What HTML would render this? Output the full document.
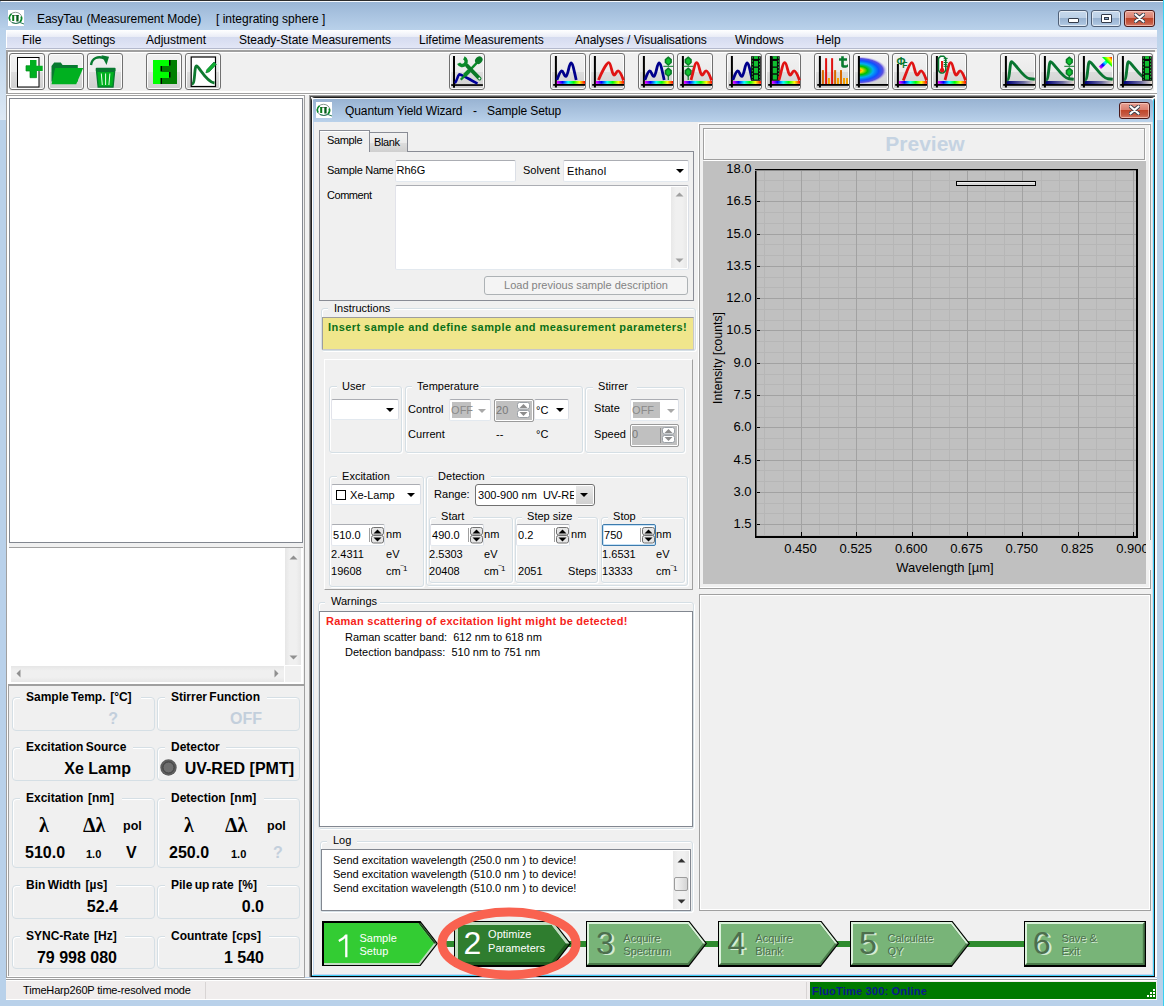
<!DOCTYPE html><html><head><meta charset="utf-8"><style>
html,body{margin:0;padding:0;}
body{width:1164px;height:1006px;position:relative;overflow:hidden;background:#b9d1ea;font-family:"Liberation Sans", sans-serif;}
body div, body svg{position:absolute;}
.t{white-space:nowrap;}
</style></head><body>
<div style="left:0px;top:0px;width:1164px;height:30px;background:linear-gradient(#98b4d4 0%, #a9c3e0 50%, #b9d1ea 100%)"></div>
<div style="left:0px;top:0px;width:1164px;height:1px;background:#2b2b2b"></div>
<div style="left:1px;top:1px;width:1162px;height:1px;background:#f6f9fd"></div>
<div style="left:0px;top:28px;width:6px;height:92px;background:linear-gradient(#b9d1ea,#d6e4f3 85%,#dde8f4)"></div>
<div style="left:1157px;top:28px;width:6px;height:92px;background:linear-gradient(#b9d1ea,#d6e4f3 85%,#dde8f4)"></div>
<div style="left:1163px;top:0px;width:1px;height:1006px;background:#38d0f0"></div>
<svg style="left:8px;top:10px" width="16" height="16" viewBox="0 0 16 16"><rect width="16" height="16" fill="#fff"/><ellipse cx="7.5" cy="7.9" rx="6.4" ry="5.6" fill="none" stroke="#8a9a92" stroke-width="1"/><path d="M2.2 10.5A6.4 5.6 0 0 1 3.5 3.8" fill="none" stroke="#0a8a2a" stroke-width="1.6"/><path d="M13.2 6.5A6.4 5.6 0 0 1 12 12" fill="none" stroke="#0a8a2a" stroke-width="1.6"/><rect x="4" y="5" width="7" height="1" fill="#8a8a8a"/><rect x="4.2" y="5" width="2" height="6" fill="#0a7a1a"/><rect x="8.3" y="5" width="2.3" height="6.5" fill="#055a1a"/><path d="M4 12.5Q8 14.5 12 12.5L16 14" fill="none" stroke="#2a7a5a" stroke-width="1"/></svg>
<div class="t" style="left:37px;top:12.84px;font-size:12px;line-height:12px;color:#000;letter-spacing:-0.1px;">EasyTau</div>
<div class="t" style="left:86.5px;top:12.84px;font-size:12px;line-height:12px;color:#000;">(Measurement Mode)</div>
<div class="t" style="left:216px;top:12.84px;font-size:12px;line-height:12px;color:#000;">[ integrating sphere ]</div>
<div style="left:1058px;top:10px;width:30px;height:17px;box-sizing:border-box;border:1px solid #4f5f76;border-radius:3px;background:linear-gradient(#c6d8ec 0%,#bcd0e6 45%,#98b2d0 50%,#a9c2de 85%,#c3d6ea 100%);box-shadow:inset 0 0 0 1px rgba(255,255,255,.55)"></div>
<div style="left:1068px;top:18px;width:11px;height:5px;background:#fff;border:1px solid #333b4a;border-radius:1px;box-sizing:border-box"></div>
<div style="left:1091px;top:10px;width:30px;height:17px;box-sizing:border-box;border:1px solid #4f5f76;border-radius:3px;background:linear-gradient(#c6d8ec 0%,#bcd0e6 45%,#98b2d0 50%,#a9c2de 85%,#c3d6ea 100%);box-shadow:inset 0 0 0 1px rgba(255,255,255,.55)"></div>
<div style="left:1101px;top:14px;width:11px;height:9px;background:#fff;border:1px solid #333b4a;border-radius:1px;box-sizing:border-box"></div>
<div style="left:1104px;top:17px;width:5px;height:3px;background:#8aa6c6;border:1px solid #333b4a;box-sizing:border-box"></div>
<div style="left:1124px;top:10px;width:31px;height:17px;box-sizing:border-box;border:1px solid #4a1a1a;border-radius:3px;background:linear-gradient(#e8a193 0%,#d98070 45%,#c0462a 50%,#c45b44 80%,#d9806c 100%);box-shadow:inset 0 0 0 1px rgba(255,220,210,.6)"></div>
<svg style="left:1134px;top:13px" width="11" height="10" viewBox="0 0 11 10"><path d="M1.5 1.5L9.5 8.5M9.5 1.5L1.5 8.5" stroke="#3a3f4a" stroke-width="4" stroke-linecap="round"/><path d="M1.5 1.5L9.5 8.5M9.5 1.5L1.5 8.5" stroke="#fff" stroke-width="2.2" stroke-linecap="round"/></svg>
<div style="left:6px;top:30px;width:1151px;height:18px;background:linear-gradient(#ffffff 0%,#e9ecf6 39%,#d5dbef 39%,#e2e6f6 100%)"></div>
<div class="t" style="left:22px;top:33.84px;font-size:12px;line-height:12px;color:#000;">File</div>
<div class="t" style="left:72px;top:33.84px;font-size:12px;line-height:12px;color:#000;">Settings</div>
<div class="t" style="left:146px;top:33.84px;font-size:12px;line-height:12px;color:#000;">Adjustment</div>
<div class="t" style="left:239px;top:33.84px;font-size:12px;line-height:12px;color:#000;">Steady-State Measurements</div>
<div class="t" style="left:419px;top:33.84px;font-size:12px;line-height:12px;color:#000;">Lifetime Measurements</div>
<div class="t" style="left:575px;top:33.84px;font-size:12px;line-height:12px;color:#000;">Analyses / Visualisations</div>
<div class="t" style="left:735px;top:33.84px;font-size:12px;line-height:12px;color:#000;">Windows</div>
<div class="t" style="left:816px;top:33.84px;font-size:12px;line-height:12px;color:#000;">Help</div>
<div style="left:6px;top:48px;width:1151px;height:1px;background:#b4b9cc"></div>
<div style="left:6px;top:49px;width:1151px;height:1px;background:#f6f6f6"></div>
<div style="left:6px;top:50px;width:1151px;height:43px;background:#f0f0f0"></div>
<div style="left:6px;top:50px;width:1149px;height:2px;background:#a0a0a0"></div>
<div style="left:6px;top:50px;width:2px;height:46px;background:#a0a0a0"></div>
<div style="left:8px;top:52px;width:1146px;height:1px;background:#fff"></div>
<div style="left:8px;top:52px;width:1px;height:40px;background:#fff"></div>
<div style="left:1154px;top:52px;width:3px;height:40px;background:#fff"></div>
<div style="left:8px;top:91px;width:1149px;height:2px;background:#ffffff"></div>
<div style="left:6px;top:93px;width:1151px;height:1px;background:#a0a0a0"></div>
<div style="left:6px;top:94px;width:1151px;height:1px;background:#ffffff"></div>
<div style="left:6px;top:95px;width:299px;height:1px;background:#a0a0a0"></div>
<div style="left:6px;top:30px;width:1px;height:18px;background:#fff"></div>
<div style="left:9px;top:53px;width:36px;height:37px;box-sizing:border-box;border:1px solid #707070;border-radius:3px;background:linear-gradient(#f2f2f2 0%,#ebebeb 50%,#dddddd 51%,#cfcfcf 100%);box-shadow:inset 0 0 0 1px #fcfcfc"></div>
<div style="left:48px;top:53px;width:36px;height:37px;box-sizing:border-box;border:1px solid #707070;border-radius:3px;background:linear-gradient(#f2f2f2 0%,#ebebeb 50%,#dddddd 51%,#cfcfcf 100%);box-shadow:inset 0 0 0 1px #fcfcfc"></div>
<div style="left:87px;top:53px;width:36px;height:37px;box-sizing:border-box;border:1px solid #707070;border-radius:3px;background:linear-gradient(#f2f2f2 0%,#ebebeb 50%,#dddddd 51%,#cfcfcf 100%);box-shadow:inset 0 0 0 1px #fcfcfc"></div>
<div style="left:146px;top:53px;width:36px;height:37px;box-sizing:border-box;border:1px solid #707070;border-radius:3px;background:linear-gradient(#f2f2f2 0%,#ebebeb 50%,#dddddd 51%,#cfcfcf 100%);box-shadow:inset 0 0 0 1px #fcfcfc"></div>
<div style="left:185px;top:53px;width:36px;height:37px;box-sizing:border-box;border:1px solid #707070;border-radius:3px;background:linear-gradient(#f2f2f2 0%,#ebebeb 50%,#dddddd 51%,#cfcfcf 100%);box-shadow:inset 0 0 0 1px #fcfcfc"></div>
<div style="left:449px;top:53px;width:36px;height:37px;box-sizing:border-box;border:1px solid #707070;border-radius:3px;background:linear-gradient(#f2f2f2 0%,#ebebeb 50%,#dddddd 51%,#cfcfcf 100%);box-shadow:inset 0 0 0 1px #fcfcfc"></div>
<div style="left:550px;top:53px;width:36px;height:37px;box-sizing:border-box;border:1px solid #707070;border-radius:3px;background:linear-gradient(#f2f2f2 0%,#ebebeb 50%,#dddddd 51%,#cfcfcf 100%);box-shadow:inset 0 0 0 1px #fcfcfc"></div>
<div style="left:589px;top:53px;width:36px;height:37px;box-sizing:border-box;border:1px solid #707070;border-radius:3px;background:linear-gradient(#f2f2f2 0%,#ebebeb 50%,#dddddd 51%,#cfcfcf 100%);box-shadow:inset 0 0 0 1px #fcfcfc"></div>
<div style="left:638px;top:53px;width:36px;height:37px;box-sizing:border-box;border:1px solid #707070;border-radius:3px;background:linear-gradient(#f2f2f2 0%,#ebebeb 50%,#dddddd 51%,#cfcfcf 100%);box-shadow:inset 0 0 0 1px #fcfcfc"></div>
<div style="left:677px;top:53px;width:36px;height:37px;box-sizing:border-box;border:1px solid #707070;border-radius:3px;background:linear-gradient(#f2f2f2 0%,#ebebeb 50%,#dddddd 51%,#cfcfcf 100%);box-shadow:inset 0 0 0 1px #fcfcfc"></div>
<div style="left:726px;top:53px;width:36px;height:37px;box-sizing:border-box;border:1px solid #707070;border-radius:3px;background:linear-gradient(#f2f2f2 0%,#ebebeb 50%,#dddddd 51%,#cfcfcf 100%);box-shadow:inset 0 0 0 1px #fcfcfc"></div>
<div style="left:765px;top:53px;width:36px;height:37px;box-sizing:border-box;border:1px solid #707070;border-radius:3px;background:linear-gradient(#f2f2f2 0%,#ebebeb 50%,#dddddd 51%,#cfcfcf 100%);box-shadow:inset 0 0 0 1px #fcfcfc"></div>
<div style="left:814px;top:53px;width:36px;height:37px;box-sizing:border-box;border:1px solid #707070;border-radius:3px;background:linear-gradient(#f2f2f2 0%,#ebebeb 50%,#dddddd 51%,#cfcfcf 100%);box-shadow:inset 0 0 0 1px #fcfcfc"></div>
<div style="left:853px;top:53px;width:36px;height:37px;box-sizing:border-box;border:1px solid #707070;border-radius:3px;background:linear-gradient(#f2f2f2 0%,#ebebeb 50%,#dddddd 51%,#cfcfcf 100%);box-shadow:inset 0 0 0 1px #fcfcfc"></div>
<div style="left:892px;top:53px;width:36px;height:37px;box-sizing:border-box;border:1px solid #707070;border-radius:3px;background:linear-gradient(#f2f2f2 0%,#ebebeb 50%,#dddddd 51%,#cfcfcf 100%);box-shadow:inset 0 0 0 1px #fcfcfc"></div>
<div style="left:931px;top:53px;width:36px;height:37px;box-sizing:border-box;border:1px solid #707070;border-radius:3px;background:linear-gradient(#f2f2f2 0%,#ebebeb 50%,#dddddd 51%,#cfcfcf 100%);box-shadow:inset 0 0 0 1px #fcfcfc"></div>
<div style="left:1000px;top:53px;width:36px;height:37px;box-sizing:border-box;border:1px solid #707070;border-radius:3px;background:linear-gradient(#f2f2f2 0%,#ebebeb 50%,#dddddd 51%,#cfcfcf 100%);box-shadow:inset 0 0 0 1px #fcfcfc"></div>
<div style="left:1039px;top:53px;width:36px;height:37px;box-sizing:border-box;border:1px solid #707070;border-radius:3px;background:linear-gradient(#f2f2f2 0%,#ebebeb 50%,#dddddd 51%,#cfcfcf 100%);box-shadow:inset 0 0 0 1px #fcfcfc"></div>
<div style="left:1078px;top:53px;width:36px;height:37px;box-sizing:border-box;border:1px solid #707070;border-radius:3px;background:linear-gradient(#f2f2f2 0%,#ebebeb 50%,#dddddd 51%,#cfcfcf 100%);box-shadow:inset 0 0 0 1px #fcfcfc"></div>
<div style="left:1117px;top:53px;width:36px;height:37px;box-sizing:border-box;border:1px solid #707070;border-radius:3px;background:linear-gradient(#f2f2f2 0%,#ebebeb 50%,#dddddd 51%,#cfcfcf 100%);box-shadow:inset 0 0 0 1px #fcfcfc"></div>
<div style="left:6px;top:96px;width:299px;height:881px;background:#f0f0f0"></div>
<div style="left:6px;top:96px;width:1px;height:881px;background:#a0a0a0"></div>
<div style="left:7px;top:96px;width:297px;height:2px;background:#fff"></div>
<div style="left:7px;top:96px;width:2px;height:881px;background:#fff"></div>
<div style="left:304px;top:96px;width:1px;height:881px;background:#a0a0a0"></div>
<div style="left:9px;top:98px;width:294px;height:445px;background:#fff;border:1px solid #828790;box-sizing:border-box"></div>
<div style="left:9px;top:547px;width:294px;height:138px;background:#fff;border-top:1px solid #a0a0a0;box-sizing:border-box"></div>
<div style="left:285px;top:548px;width:16px;height:117px;background:linear-gradient(90deg,#e6e6e6,#f0f0f0 30%,#f0f0f0 70%,#e6e6e6)"></div>
<svg style="left:289px;top:555px" width="9" height="5"><path d="M0.5 4.5L4.5 0.5L8.5 4.5Z" fill="#909090"/></svg>
<svg style="left:289px;top:655px" width="9" height="5"><path d="M0.5 0.5L4.5 4.5L8.5 0.5Z" fill="#909090"/></svg>
<div style="left:11px;top:666px;width:273px;height:16px;background:linear-gradient(#e6e6e6,#f0f0f0 30%,#f0f0f0 70%,#e6e6e6)"></div>
<div style="left:285px;top:666px;width:16px;height:16px;background:#f0f0f0"></div>
<svg style="left:16px;top:669px" width="5" height="9"><path d="M4.5 0.5L0.5 4.5L4.5 8.5Z" fill="#909090"/></svg>
<svg style="left:274px;top:669px" width="5" height="9"><path d="M0.5 0.5L4.5 4.5L0.5 8.5Z" fill="#909090"/></svg>
<div style="left:8px;top:684px;width:296px;height:2px;background:#a0a0a0"></div>
<div style="left:8px;top:686px;width:296px;height:291px;background:#f0f0f0"></div>
<div style="left:8px;top:686px;width:1px;height:291px;background:#a0a0a0"></div>
<div style="left:8px;top:976px;width:296px;height:1px;background:#fff"></div>
<div style="left:12px;top:697px;width:143px;height:34px;border:1px solid #d5dfe5;border-radius:4px;box-shadow:inset 1px 1px 0 #fff;box-sizing:border-box"></div>
<div class="t" style="left:20px;top:695px;height:4px;background:#f0f0f0;padding:0 6px;font-size:12px;line-height:0;color:transparent;font-weight:bold">Sample Temp.&nbsp; [°C]</div>
<div class="t" style="left:26px;top:691.34px;font-size:12px;line-height:12px;color:#000;font-weight:bold;word-spacing:-1px">Sample Temp.&nbsp; [°C]</div>
<div style="left:157px;top:697px;width:143px;height:34px;border:1px solid #d5dfe5;border-radius:4px;box-shadow:inset 1px 1px 0 #fff;box-sizing:border-box"></div>
<div class="t" style="left:165px;top:695px;height:4px;background:#f0f0f0;padding:0 6px;font-size:12px;line-height:0;color:transparent;font-weight:bold">Stirrer Function</div>
<div class="t" style="left:171px;top:691.34px;font-size:12px;line-height:12px;color:#000;font-weight:bold;word-spacing:-1px">Stirrer Function</div>
<div style="left:12px;top:747px;width:143px;height:34px;border:1px solid #d5dfe5;border-radius:4px;box-shadow:inset 1px 1px 0 #fff;box-sizing:border-box"></div>
<div class="t" style="left:20px;top:745px;height:4px;background:#f0f0f0;padding:0 6px;font-size:12px;line-height:0;color:transparent;font-weight:bold">Excitation Source</div>
<div class="t" style="left:26px;top:741.34px;font-size:12px;line-height:12px;color:#000;font-weight:bold;word-spacing:-1px">Excitation Source</div>
<div style="left:157px;top:747px;width:143px;height:34px;border:1px solid #d5dfe5;border-radius:4px;box-shadow:inset 1px 1px 0 #fff;box-sizing:border-box"></div>
<div class="t" style="left:165px;top:745px;height:4px;background:#f0f0f0;padding:0 6px;font-size:12px;line-height:0;color:transparent;font-weight:bold">Detector</div>
<div class="t" style="left:171px;top:741.34px;font-size:12px;line-height:12px;color:#000;font-weight:bold;word-spacing:-1px">Detector</div>
<div style="left:12px;top:798px;width:143px;height:70px;border:1px solid #d5dfe5;border-radius:4px;box-shadow:inset 1px 1px 0 #fff;box-sizing:border-box"></div>
<div class="t" style="left:20px;top:796px;height:4px;background:#f0f0f0;padding:0 6px;font-size:12px;line-height:0;color:transparent;font-weight:bold">Excitation&nbsp; [nm]</div>
<div class="t" style="left:26px;top:792.34px;font-size:12px;line-height:12px;color:#000;font-weight:bold;word-spacing:-1px">Excitation&nbsp; [nm]</div>
<div style="left:157px;top:798px;width:143px;height:70px;border:1px solid #d5dfe5;border-radius:4px;box-shadow:inset 1px 1px 0 #fff;box-sizing:border-box"></div>
<div class="t" style="left:165px;top:796px;height:4px;background:#f0f0f0;padding:0 6px;font-size:12px;line-height:0;color:transparent;font-weight:bold">Detection&nbsp; [nm]</div>
<div class="t" style="left:171px;top:792.34px;font-size:12px;line-height:12px;color:#000;font-weight:bold;word-spacing:-1px">Detection&nbsp; [nm]</div>
<div style="left:12px;top:885px;width:143px;height:34px;border:1px solid #d5dfe5;border-radius:4px;box-shadow:inset 1px 1px 0 #fff;box-sizing:border-box"></div>
<div class="t" style="left:20px;top:883px;height:4px;background:#f0f0f0;padding:0 6px;font-size:12px;line-height:0;color:transparent;font-weight:bold">Bin Width&nbsp; [µs]</div>
<div class="t" style="left:26px;top:879.34px;font-size:12px;line-height:12px;color:#000;font-weight:bold;word-spacing:-1px">Bin Width&nbsp; [µs]</div>
<div style="left:157px;top:885px;width:143px;height:34px;border:1px solid #d5dfe5;border-radius:4px;box-shadow:inset 1px 1px 0 #fff;box-sizing:border-box"></div>
<div class="t" style="left:165px;top:883px;height:4px;background:#f0f0f0;padding:0 6px;font-size:12px;line-height:0;color:transparent;font-weight:bold">Pile up rate&nbsp; [%]</div>
<div class="t" style="left:171px;top:879.34px;font-size:12px;line-height:12px;color:#000;font-weight:bold;word-spacing:-1px">Pile up rate&nbsp; [%]</div>
<div style="left:12px;top:936px;width:143px;height:33px;border:1px solid #d5dfe5;border-radius:4px;box-shadow:inset 1px 1px 0 #fff;box-sizing:border-box"></div>
<div class="t" style="left:20px;top:934px;height:4px;background:#f0f0f0;padding:0 6px;font-size:12px;line-height:0;color:transparent;font-weight:bold">SYNC-Rate&nbsp; [Hz]</div>
<div class="t" style="left:26px;top:930.34px;font-size:12px;line-height:12px;color:#000;font-weight:bold;word-spacing:-1px">SYNC-Rate&nbsp; [Hz]</div>
<div style="left:157px;top:936px;width:143px;height:33px;border:1px solid #d5dfe5;border-radius:4px;box-shadow:inset 1px 1px 0 #fff;box-sizing:border-box"></div>
<div class="t" style="left:165px;top:934px;height:4px;background:#f0f0f0;padding:0 6px;font-size:12px;line-height:0;color:transparent;font-weight:bold">Countrate&nbsp; [cps]</div>
<div class="t" style="left:171px;top:930.34px;font-size:12px;line-height:12px;color:#000;font-weight:bold;word-spacing:-1px">Countrate&nbsp; [cps]</div>
<div class="t" style="right:1046px;top:711.06px;font-size:16px;line-height:16px;color:#c3cfdc;font-weight:bold;">?</div>
<div class="t" style="right:902px;top:711.06px;font-size:16px;line-height:16px;color:#c3cfdc;font-weight:bold;">OFF</div>
<div class="t" style="right:1033px;top:761.06px;font-size:16px;line-height:16px;color:#000;font-weight:bold;">Xe Lamp</div>
<svg style="left:159px;top:758px" width="19" height="19" viewBox="0 0 19 19"><circle cx="9.5" cy="9.5" r="8.8" fill="#f8f8f8"/><circle cx="9.5" cy="9.5" r="8.2" fill="#5e5e5e"/><circle cx="9.5" cy="9.5" r="5.6" fill="#6e6e6e" stroke="#3c3c3c" stroke-width="1"/></svg>
<div class="t" style="right:870px;top:761.06px;font-size:16px;line-height:16px;color:#000;font-weight:bold;">UV-RED [PMT]</div>
<div class="t" style="left:39px;top:815.07px;font-size:20px;line-height:20px;color:#000;font-weight:bold;font-family:Liberation Serif,serif">λ</div>
<div class="t" style="left:83px;top:815.07px;font-size:20px;line-height:20px;color:#000;font-weight:bold;font-family:Liberation Serif,serif">Δλ</div>
<div class="t" style="left:123px;top:820.42px;font-size:12.5px;line-height:12.5px;color:#000;font-weight:bold;">pol</div>
<div class="t" style="left:184px;top:815.07px;font-size:20px;line-height:20px;color:#000;font-weight:bold;font-family:Liberation Serif,serif">λ</div>
<div class="t" style="left:225px;top:815.07px;font-size:20px;line-height:20px;color:#000;font-weight:bold;font-family:Liberation Serif,serif">Δλ</div>
<div class="t" style="left:267px;top:820.42px;font-size:12.5px;line-height:12.5px;color:#000;font-weight:bold;">pol</div>
<div class="t" style="left:25px;top:845.06px;font-size:16px;line-height:16px;color:#000;font-weight:bold;">510.0</div>
<div class="t" style="left:86px;top:848.69px;font-size:11px;line-height:11px;color:#000;font-weight:bold;">1.0</div>
<div class="t" style="left:126px;top:845.06px;font-size:16px;line-height:16px;color:#000;font-weight:bold;">V</div>
<div class="t" style="left:169px;top:845.06px;font-size:16px;line-height:16px;color:#000;font-weight:bold;">250.0</div>
<div class="t" style="left:231px;top:848.69px;font-size:11px;line-height:11px;color:#000;font-weight:bold;">1.0</div>
<div class="t" style="left:273px;top:845.06px;font-size:16px;line-height:16px;color:#c3cfdc;font-weight:bold;">?</div>
<div class="t" style="right:1046px;top:899.06px;font-size:16px;line-height:16px;color:#000;font-weight:bold;">52.4</div>
<div class="t" style="right:900px;top:899.06px;font-size:16px;line-height:16px;color:#000;font-weight:bold;">0.0</div>
<div class="t" style="right:1047px;top:950.06px;font-size:16px;line-height:16px;color:#000;font-weight:bold;">79 998 080</div>
<div class="t" style="right:900px;top:950.06px;font-size:16px;line-height:16px;color:#000;font-weight:bold;">1 540</div>
<div style="left:6px;top:977px;width:299px;height:1px;background:#a0a0a0"></div>
<div style="left:6px;top:978px;width:1151px;height:1px;background:#fff"></div>
<div style="left:6px;top:979px;width:1151px;height:1px;background:#a0a0a0"></div>
<div style="left:6px;top:980px;width:1151px;height:20px;background:#f0eded"></div>
<div style="left:6px;top:980px;width:1151px;height:1px;background:#fff"></div>
<div style="left:6px;top:999px;width:1151px;height:1px;background:#fff"></div>
<div style="left:205px;top:982px;width:1px;height:17px;background:#d8d4d4"></div>
<div style="left:806px;top:982px;width:1px;height:17px;background:#d8d4d4"></div>
<div class="t" style="left:23px;top:984.69px;font-size:11px;line-height:11px;color:#000;letter-spacing:-0.17px;">TimeHarp260P time-resolved mode</div>
<div style="left:810px;top:982px;width:346px;height:17px;background:#007a00"></div>
<div style="left:1153px;top:989px;width:2px;height:2px;background:#fff"></div>
<div style="left:1150px;top:992px;width:2px;height:2px;background:#fff"></div>
<div style="left:1153px;top:992px;width:2px;height:2px;background:#fff"></div>
<div style="left:1147px;top:995px;width:2px;height:2px;background:#fff"></div>
<div style="left:1150px;top:995px;width:2px;height:2px;background:#fff"></div>
<div style="left:1153px;top:995px;width:2px;height:2px;background:#fff"></div>
<div class="t" style="left:812px;top:985.69px;font-size:11px;line-height:11px;color:#0a1a8a;font-weight:bold;letter-spacing:0.2px;">FluoTime 300: Online</div>
<div style="left:305px;top:95px;width:4px;height:882px;background:#f0f0f0"></div>
<div style="left:309px;top:95px;width:848px;height:882px;background:#fff"></div>
<div style="left:309px;top:95px;width:1px;height:882px;background:#a0a0a0"></div>
<div style="left:309px;top:95px;width:846px;height:1px;background:#a0a0a0"></div>
<div style="left:310px;top:96px;width:1px;height:881px;background:#555"></div>
<div style="left:310px;top:96px;width:845px;height:1px;background:#555"></div>
<div style="left:311px;top:97px;width:844px;height:880px;border:1px solid #1e1e1e;border-radius:4px 4px 0 0;box-sizing:border-box;border-bottom:none;height:880px"></div>
<div style="left:311px;top:976px;width:844px;height:1px;background:#000"></div>
<div style="left:312px;top:98px;width:842px;height:1px;background:#ffffff"></div>
<div style="left:312px;top:99px;width:841px;height:23px;background:linear-gradient(#98b3d2 0%,#a9c2de 50%,#b9d1ea 100%);border-radius:3px 3px 0 0"></div>
<div style="left:312px;top:99px;width:1px;height:877px;background:#fff"></div>
<div style="left:1153px;top:99px;width:1px;height:877px;background:#40d0f8"></div>
<div style="left:312px;top:975px;width:842px;height:1px;background:#40d0f8"></div>
<div style="left:313px;top:122px;width:840px;height:853px;background:#f0f0f0"></div>
<div style="left:313px;top:122px;width:1px;height:853px;background:#c4d8ee"></div>
<div style="left:1152px;top:122px;width:1px;height:853px;background:#d0e0f0"></div>
<div style="left:313px;top:974px;width:840px;height:1px;background:#c8d4ee"></div>
<svg style="left:316px;top:102px" width="16" height="16" viewBox="0 0 16 16"><rect width="16" height="16" fill="#fff"/><ellipse cx="7.5" cy="7.9" rx="6.4" ry="5.6" fill="none" stroke="#8a9a92" stroke-width="1"/><path d="M2.2 10.5A6.4 5.6 0 0 1 3.5 3.8" fill="none" stroke="#0a8a2a" stroke-width="1.6"/><path d="M13.2 6.5A6.4 5.6 0 0 1 12 12" fill="none" stroke="#0a8a2a" stroke-width="1.6"/><rect x="4" y="5" width="7" height="1" fill="#8a8a8a"/><rect x="4.2" y="5" width="2" height="6" fill="#0a7a1a"/><rect x="8.3" y="5" width="2.3" height="6.5" fill="#055a1a"/><path d="M4 12.5Q8 14.5 12 12.5L16 14" fill="none" stroke="#2a7a5a" stroke-width="1"/></svg>
<div class="t" style="left:345px;top:104.84px;font-size:12px;line-height:12px;color:#000;letter-spacing:-0.1px;">Quantum Yield Wizard</div>
<div class="t" style="left:473px;top:104.84px;font-size:12px;line-height:12px;color:#000;">-</div>
<div class="t" style="left:487px;top:104.84px;font-size:12px;line-height:12px;color:#000;letter-spacing:-0.1px;">Sample Setup</div>
<div style="left:1119px;top:102px;width:31px;height:17px;box-sizing:border-box;border:1px solid #4a1a1a;border-radius:3px;background:linear-gradient(#e8a193 0%,#d98070 45%,#c0462a 50%,#c45b44 80%,#d9806c 100%);box-shadow:inset 0 0 0 1px rgba(255,220,210,.6)"></div>
<svg style="left:1129px;top:105px" width="11" height="10" viewBox="0 0 11 10"><path d="M1.5 1.5L9.5 8.5M9.5 1.5L1.5 8.5" stroke="#3a3f4a" stroke-width="4" stroke-linecap="round"/><path d="M1.5 1.5L9.5 8.5M9.5 1.5L1.5 8.5" stroke="#fff" stroke-width="2.2" stroke-linecap="round"/></svg>
<div style="left:319px;top:151px;width:375px;height:150px;background:#fff;border:1px solid #898c95;box-sizing:border-box"></div>
<div style="left:320px;top:152px;width:373px;height:148px;background:#f0f0f0"></div>
<div style="left:369px;top:132px;width:39px;height:20px;background:linear-gradient(#f2f2f2,#ebebeb 50%,#dddddd 51%,#cfcfcf);border:1px solid #898c95;border-bottom:none;box-sizing:border-box"></div>
<div style="left:319px;top:130px;width:51px;height:22px;background:#f0f0f0;border:1px solid #898c95;border-bottom:none;box-sizing:border-box"></div>
<div style="left:320px;top:131px;width:49px;height:1px;background:#fff"></div>
<div class="t" style="left:327px;top:134.69px;font-size:11px;line-height:11px;color:#000;letter-spacing:-0.35px;">Sample</div>
<div class="t" style="left:374px;top:136.69px;font-size:11px;line-height:11px;color:#000;letter-spacing:-0.35px;">Blank</div>
<div class="t" style="left:327px;top:164.69px;font-size:11px;line-height:11px;color:#000;letter-spacing:-0.3px;">Sample Name</div>
<div style="left:395px;top:160px;width:121px;height:22px;background:#fff;border-top:1px solid #abadb3;border-left:1px solid #e2e3ea;border-right:1px solid #dbdfe6;border-bottom:1px solid #e3e9ef;box-sizing:border-box;border-radius:2px;"></div>
<div class="t" style="left:396.5px;top:164.69px;font-size:11px;line-height:11px;color:#000;">Rh6G</div>
<div class="t" style="left:523px;top:164.69px;font-size:11px;line-height:11px;color:#000;">Solvent</div>
<div style="left:563px;top:160px;width:126px;height:22px;background:#fff;border-top:1px solid #abadb3;border-left:1px solid #e2e3ea;border-right:1px solid #dbdfe6;border-bottom:1px solid #e3e9ef;box-sizing:border-box;border-radius:2px;"></div>
<div class="t" style="left:567px;top:165.69px;font-size:11px;line-height:11px;color:#000;letter-spacing:0.3px;">Ethanol</div>
<div style="left:676px;top:169px;width:0;height:0;border-left:4px solid transparent;border-right:4px solid transparent;border-top:4px solid #000"></div>
<div class="t" style="left:327px;top:189.69px;font-size:11px;line-height:11px;color:#000;letter-spacing:-0.45px;">Comment</div>
<div style="left:395px;top:185px;width:294px;height:85px;background:#fff;border-top:1px solid #abadb3;border-left:1px solid #e2e3ea;border-right:1px solid #dbdfe6;border-bottom:1px solid #e3e9ef;box-sizing:border-box;border-radius:2px;"></div>
<div style="left:671px;top:187px;width:16px;height:81px;background:linear-gradient(90deg,#e8e8e8,#f0f0f0 30%,#f0f0f0 70%,#e8e8e8)"></div>
<svg style="left:675px;top:192px" width="9" height="5"><path d="M0.5 4.5L4.5 0.5L8.5 4.5Z" fill="#a0a0a0"/></svg>
<svg style="left:675px;top:258px" width="9" height="5"><path d="M0.5 0.5L4.5 4.5L8.5 0.5Z" fill="#a0a0a0"/></svg>
<div style="left:484px;top:276px;width:204px;height:19px;background:#f4f4f4;border:1px solid #adb2b5;border-radius:3px;box-sizing:border-box"></div>
<div class="t" style="left:286px;width:600px;text-align:center;top:279.69px;font-size:11px;line-height:11px;color:#838383;">Load previous sample description</div>
<div style="left:321px;top:308px;width:375px;height:43px;border:1px solid #d5dfe5;border-radius:3px;box-shadow:inset 1px 1px 0 #fff, 1px 1px 0 #fff;box-sizing:border-box"></div>
<div style="left:328px;top:307px;width:66px;height:3px;background:#f0f0f0"></div>
<div class="t" style="left:334px;top:302.89px;font-size:11px;line-height:11px;color:#000;">Instructions</div>
<div style="left:322px;top:317px;width:372px;height:33px;background:#f0e68c;border:1px solid #9d9d9d;border-bottom-color:#c8c8c8;border-right-color:#c8c8c8;box-sizing:border-box"></div>
<div class="t" style="left:328px;top:321.69px;font-size:11px;line-height:11px;color:#0b7018;font-weight:bold;letter-spacing:0.44px;">Insert sample and define sample and measurement parameters!</div>
<div style="left:324px;top:359px;width:369px;height:231px;border-top:1px solid #fff;border-left:1px solid #fff;border-right:1px solid #a0a0a0;border-bottom:1px solid #a0a0a0;box-sizing:border-box"></div>
<div style="left:329px;top:386px;width:73px;height:67px;border:1px solid #d5dfe5;border-radius:3px;box-shadow:inset 1px 1px 0 #fff, 1px 1px 0 #fff;box-sizing:border-box"></div>
<div style="left:337px;top:385px;width:34px;height:3px;background:#f0f0f0"></div>
<div class="t" style="left:342.1px;top:380.69px;font-size:11px;line-height:11px;color:#000;">User</div>
<div style="left:331px;top:399px;width:68px;height:21px;background:#fff;border-top:1px solid #abadb3;border-left:1px solid #e2e3ea;border-right:1px solid #dbdfe6;border-bottom:1px solid #e3e9ef;box-sizing:border-box;border-radius:2px;"></div>
<div style="left:386px;top:408px;width:0;height:0;border-left:4px solid transparent;border-right:4px solid transparent;border-top:4px solid #000"></div>
<div style="left:405px;top:386px;width:178px;height:67px;border:1px solid #d5dfe5;border-radius:3px;box-shadow:inset 1px 1px 0 #fff, 1px 1px 0 #fff;box-sizing:border-box"></div>
<div style="left:412px;top:385px;width:69px;height:3px;background:#f0f0f0"></div>
<div class="t" style="left:417.1px;top:380.69px;font-size:11px;line-height:11px;color:#000;">Temperature</div>
<div class="t" style="left:408.1px;top:403.69px;font-size:11px;line-height:11px;color:#000;">Control</div>
<div class="t" style="left:408.1px;top:428.69px;font-size:11px;line-height:11px;color:#000;">Current</div>
<div style="left:449px;top:399px;width:42px;height:22px;background:#fff;border-top:1px solid #abadb3;border-left:1px solid #e2e3ea;border-right:1px solid #dbdfe6;border-bottom:1px solid #e3e9ef;box-sizing:border-box;border-radius:2px;"></div>
<div style="left:452px;top:402px;width:19px;height:16px;background:#c0c0c0"></div>
<div class="t" style="left:451.1px;top:404.69px;font-size:11px;line-height:11px;color:#8a8a8a;">OFF</div>
<div style="left:478px;top:409px;width:0;height:0;border-left:4px solid transparent;border-right:4px solid transparent;border-top:4px solid #a8a8a8"></div>
<div style="left:494px;top:399px;width:40px;height:23px;background:#c0c0c0;border:1px solid #9a9a9a;border-radius:2px;box-sizing:border-box;box-shadow:inset 0 0 0 1px #fff"></div>
<svg style="left:517px;top:402px" width="13" height="16" viewBox="0 0 13 16"><rect x="0.5" y="0.5" width="12" height="6.5" rx="2" fill="#fff" stroke="#9aa0a6"/><rect x="0.5" y="8.5" width="12" height="7" rx="2" fill="#fff" stroke="#9aa0a6"/><path d="M2.5 6L6.5 2L10.5 6Z" fill="#8c8c8c"/><path d="M2.5 10L6.5 14L10.5 10Z" fill="#8c8c8c"/></svg>
<div class="t" style="left:496.1px;top:404.69px;font-size:11px;line-height:11px;color:#7a7a7a;">20</div>
<div class="t" style="left:496.1px;top:428.69px;font-size:11px;line-height:11px;color:#000;">--</div>
<div style="left:534px;top:399px;width:35px;height:21px;background:#fff;border-top:1px solid #abadb3;border-left:1px solid #e2e3ea;border-right:1px solid #dbdfe6;border-bottom:1px solid #e3e9ef;box-sizing:border-box;border-radius:2px;"></div>
<div class="t" style="left:536.1px;top:404.69px;font-size:11px;line-height:11px;color:#000;">°C</div>
<div class="t" style="left:536.1px;top:428.69px;font-size:11px;line-height:11px;color:#000;">°C</div>
<div style="left:556px;top:408px;width:0;height:0;border-left:4px solid transparent;border-right:4px solid transparent;border-top:4px solid #000"></div>
<div style="left:585px;top:387px;width:100px;height:66px;border:1px solid #d5dfe5;border-radius:3px;box-shadow:inset 1px 1px 0 #fff, 1px 1px 0 #fff;box-sizing:border-box"></div>
<div style="left:593px;top:386px;width:44px;height:3px;background:#f0f0f0"></div>
<div class="t" style="left:598.1px;top:380.69px;font-size:11px;line-height:11px;color:#000;">Stirrer</div>
<div class="t" style="left:594.1px;top:402.69px;font-size:11px;line-height:11px;color:#000;">State</div>
<div class="t" style="left:594.1px;top:428.69px;font-size:11px;line-height:11px;color:#000;">Speed</div>
<div style="left:630px;top:399px;width:49px;height:22px;background:#fff;border-top:1px solid #abadb3;border-left:1px solid #e2e3ea;border-right:1px solid #dbdfe6;border-bottom:1px solid #e3e9ef;box-sizing:border-box;border-radius:2px;"></div>
<div style="left:633px;top:402px;width:27px;height:16px;background:#c0c0c0"></div>
<div class="t" style="left:632.1px;top:404.69px;font-size:11px;line-height:11px;color:#8a8a8a;">OFF</div>
<div style="left:667px;top:409px;width:0;height:0;border-left:4px solid transparent;border-right:4px solid transparent;border-top:4px solid #a8a8a8"></div>
<div style="left:630px;top:424px;width:49px;height:23px;background:#c0c0c0;border:1px solid #9a9a9a;border-radius:2px;box-sizing:border-box;box-shadow:inset 0 0 0 1px #fff"></div>
<div style="left:660px;top:428px;width:1px;height:15px;background:#909090"></div>
<svg style="left:662px;top:427px" width="13" height="16" viewBox="0 0 13 16"><rect x="0.5" y="0.5" width="12" height="6.5" rx="2" fill="#fff" stroke="#9aa0a6"/><rect x="0.5" y="8.5" width="12" height="7" rx="2" fill="#fff" stroke="#9aa0a6"/><path d="M2.5 6L6.5 2L10.5 6Z" fill="#8c8c8c"/><path d="M2.5 10L6.5 14L10.5 10Z" fill="#8c8c8c"/></svg>
<div class="t" style="left:632.1px;top:428.69px;font-size:11px;line-height:11px;color:#7a7a7a;">0</div>
<div style="left:329px;top:476px;width:95px;height:111px;border:1px solid #d5dfe5;border-radius:3px;box-shadow:inset 1px 1px 0 #fff, 1px 1px 0 #fff;box-sizing:border-box"></div>
<div style="left:337px;top:475px;width:60px;height:3px;background:#f0f0f0"></div>
<div class="t" style="left:342.1px;top:470.69px;font-size:11px;line-height:11px;color:#000;">Excitation</div>
<div style="left:331px;top:484px;width:90px;height:21px;background:#fff;border-top:1px solid #abadb3;border-left:1px solid #e2e3ea;border-right:1px solid #dbdfe6;border-bottom:1px solid #e3e9ef;box-sizing:border-box;border-radius:2px;"></div>
<div style="left:336px;top:490px;width:10px;height:10px;border:1px solid #000;box-sizing:border-box;background:#fff"></div>
<div class="t" style="left:350.1px;top:489.69px;font-size:11px;line-height:11px;color:#000;">Xe-Lamp</div>
<div style="left:407px;top:493px;width:0;height:0;border-left:4px solid transparent;border-right:4px solid transparent;border-top:4px solid #000"></div>
<div style="left:426px;top:476px;width:262px;height:110px;border:1px solid #d5dfe5;border-radius:3px;box-shadow:inset 1px 1px 0 #fff, 1px 1px 0 #fff;box-sizing:border-box"></div>
<div style="left:433px;top:475px;width:58px;height:3px;background:#f0f0f0"></div>
<div class="t" style="left:438.1px;top:470.69px;font-size:11px;line-height:11px;color:#000;">Detection</div>
<div class="t" style="left:434.1px;top:488.69px;font-size:11px;line-height:11px;color:#000;">Range:</div>
<div style="left:475px;top:484px;width:120px;height:22px;background:#fff;border:1px solid #707070;border-radius:3px;box-sizing:border-box"></div>
<div style="left:576px;top:486px;width:17px;height:18px;background:linear-gradient(#e8e8e8,#d0d0d0)"></div>
<div class="t" style="left:478.1px;top:489.69px;font-size:11px;line-height:11px;color:#000;width:96px;overflow:hidden">300-900 nm&nbsp; UV-RE<span style="display:inline-block;width:3px;height:10px;background:#000;vertical-align:-1px"></span></div>
<div style="left:580px;top:493px;width:0;height:0;border-left:4px solid transparent;border-right:4px solid transparent;border-top:4px solid #000"></div>
<div style="left:429px;top:517px;width:84px;height:66px;border:1px solid #d5dfe5;border-radius:3px;box-shadow:inset 1px 1px 0 #fff, 1px 1px 0 #fff;box-sizing:border-box"></div>
<div style="left:436px;top:516px;width:37px;height:3px;background:#f0f0f0"></div>
<div class="t" style="left:441.1px;top:510.69px;font-size:11px;line-height:11px;color:#000;">Start</div>
<div style="left:515px;top:517px;width:83px;height:66px;border:1px solid #d5dfe5;border-radius:3px;box-shadow:inset 1px 1px 0 #fff, 1px 1px 0 #fff;box-sizing:border-box"></div>
<div style="left:522px;top:516px;width:56px;height:3px;background:#f0f0f0"></div>
<div class="t" style="left:527.1px;top:510.69px;font-size:11px;line-height:11px;color:#000;">Step size</div>
<div style="left:601px;top:517px;width:84px;height:66px;border:1px solid #d5dfe5;border-radius:3px;box-shadow:inset 1px 1px 0 #fff, 1px 1px 0 #fff;box-sizing:border-box"></div>
<div style="left:608px;top:516px;width:34px;height:3px;background:#f0f0f0"></div>
<div class="t" style="left:613.1px;top:510.69px;font-size:11px;line-height:11px;color:#000;">Stop</div>
<div style="left:331px;top:524px;width:54px;height:22px;background:#fff;border-top:1px solid #abadb3;border-left:1px solid #e2e3ea;border-right:1px solid #dbdfe6;border-bottom:1px solid #e3e9ef;box-sizing:border-box;border-radius:2px;"></div>
<div class="t" style="left:333.1px;top:529.69px;font-size:11px;line-height:11px;color:#000;">510.0</div>
<div style="left:369px;top:528px;width:1px;height:14px;background:#a0a0a0"></div>
<svg style="left:371px;top:527px" width="13" height="17" viewBox="0 0 13 17"><rect x="0.5" y="0.5" width="12" height="7.5" rx="2" fill="#e6e6e6" stroke="#707070"/><rect x="0.5" y="8.5" width="12" height="7.5" rx="2" fill="#e6e6e6" stroke="#707070"/><path d="M2.5 6.5L6.5 2.5L10.5 6.5Z" fill="#000"/><path d="M2.5 10.5L6.5 14.5L10.5 10.5Z" fill="#000"/></svg>
<div class="t" style="left:386.1px;top:528.69px;font-size:11px;line-height:11px;color:#000;">nm</div>
<div class="t" style="left:331.1px;top:548.69px;font-size:11px;line-height:11px;color:#000;">2.4311</div>
<div class="t" style="left:386.1px;top:548.69px;font-size:11px;line-height:11px;color:#000;">eV</div>
<div class="t" style="left:331.1px;top:565.69px;font-size:11px;line-height:11px;color:#000;">19608</div>
<div class="t" style="left:386.1px;top:565.69px;font-size:11px;line-height:11px;color:#000;">cm<span style="font-size:8px;position:relative;top:-4px;letter-spacing:-0.5px">&#8254;1</span></div>
<div style="left:430px;top:524px;width:54px;height:22px;background:#fff;border-top:1px solid #abadb3;border-left:1px solid #e2e3ea;border-right:1px solid #dbdfe6;border-bottom:1px solid #e3e9ef;box-sizing:border-box;border-radius:2px;"></div>
<div class="t" style="left:432.1px;top:529.69px;font-size:11px;line-height:11px;color:#000;">490.0</div>
<div style="left:468px;top:528px;width:1px;height:14px;background:#a0a0a0"></div>
<svg style="left:470px;top:527px" width="13" height="17" viewBox="0 0 13 17"><rect x="0.5" y="0.5" width="12" height="7.5" rx="2" fill="#e6e6e6" stroke="#707070"/><rect x="0.5" y="8.5" width="12" height="7.5" rx="2" fill="#e6e6e6" stroke="#707070"/><path d="M2.5 6.5L6.5 2.5L10.5 6.5Z" fill="#000"/><path d="M2.5 10.5L6.5 14.5L10.5 10.5Z" fill="#000"/></svg>
<div class="t" style="left:484.1px;top:528.69px;font-size:11px;line-height:11px;color:#000;">nm</div>
<div class="t" style="left:429.1px;top:548.69px;font-size:11px;line-height:11px;color:#000;">2.5303</div>
<div class="t" style="left:484.1px;top:548.69px;font-size:11px;line-height:11px;color:#000;">eV</div>
<div class="t" style="left:429.1px;top:565.69px;font-size:11px;line-height:11px;color:#000;">20408</div>
<div class="t" style="left:484.1px;top:565.69px;font-size:11px;line-height:11px;color:#000;">cm<span style="font-size:8px;position:relative;top:-4px;letter-spacing:-0.5px">&#8254;1</span></div>
<div style="left:516px;top:524px;width:54px;height:22px;background:#fff;border-top:1px solid #abadb3;border-left:1px solid #e2e3ea;border-right:1px solid #dbdfe6;border-bottom:1px solid #e3e9ef;box-sizing:border-box;border-radius:2px;"></div>
<div class="t" style="left:518.1px;top:529.69px;font-size:11px;line-height:11px;color:#000;">0.2</div>
<div style="left:554px;top:528px;width:1px;height:14px;background:#a0a0a0"></div>
<svg style="left:556px;top:527px" width="13" height="17" viewBox="0 0 13 17"><rect x="0.5" y="0.5" width="12" height="7.5" rx="2" fill="#e6e6e6" stroke="#707070"/><rect x="0.5" y="8.5" width="12" height="7.5" rx="2" fill="#e6e6e6" stroke="#707070"/><path d="M2.5 6.5L6.5 2.5L10.5 6.5Z" fill="#000"/><path d="M2.5 10.5L6.5 14.5L10.5 10.5Z" fill="#000"/></svg>
<div class="t" style="left:571.1px;top:528.69px;font-size:11px;line-height:11px;color:#000;">nm</div>
<div class="t" style="left:518.1px;top:565.69px;font-size:11px;line-height:11px;color:#000;">2051</div>
<div class="t" style="left:568.1px;top:565.69px;font-size:11px;line-height:11px;color:#000;">Steps</div>
<div style="left:602px;top:524px;width:54px;height:22px;background:#fff;border:1px solid #3d7bad;border-top-color:#3d7bad;border-radius:2px;box-sizing:border-box;box-shadow:inset 0 0 0 1px #c6e2f7"></div>
<div class="t" style="left:604.1px;top:529.69px;font-size:11px;line-height:11px;color:#000;">750</div>
<div style="left:640px;top:528px;width:1px;height:14px;background:#a0a0a0"></div>
<svg style="left:642px;top:527px" width="13" height="17" viewBox="0 0 13 17"><rect x="0.5" y="0.5" width="12" height="7.5" rx="2" fill="#e6e6e6" stroke="#707070"/><rect x="0.5" y="8.5" width="12" height="7.5" rx="2" fill="#e6e6e6" stroke="#707070"/><path d="M2.5 6.5L6.5 2.5L10.5 6.5Z" fill="#000"/><path d="M2.5 10.5L6.5 14.5L10.5 10.5Z" fill="#000"/></svg>
<div class="t" style="left:656.1px;top:528.69px;font-size:11px;line-height:11px;color:#000;">nm</div>
<div class="t" style="left:602.1px;top:548.69px;font-size:11px;line-height:11px;color:#000;">1.6531</div>
<div class="t" style="left:656.1px;top:548.69px;font-size:11px;line-height:11px;color:#000;">eV</div>
<div class="t" style="left:602.1px;top:565.69px;font-size:11px;line-height:11px;color:#000;">13333</div>
<div class="t" style="left:656.1px;top:565.69px;font-size:11px;line-height:11px;color:#000;">cm<span style="font-size:8px;position:relative;top:-4px;letter-spacing:-0.5px">&#8254;1</span></div>
<div style="left:318px;top:602px;width:376px;height:227px;border:1px solid #d5dfe5;border-radius:3px;box-shadow:inset 1px 1px 0 #fff, 1px 1px 0 #fff;box-sizing:border-box"></div>
<div style="left:325px;top:601px;width:55px;height:3px;background:#f0f0f0"></div>
<div class="t" style="left:331px;top:596.29px;font-size:11px;line-height:11px;color:#000;">Warnings</div>
<div style="left:319px;top:611px;width:374px;height:216px;background:#fff;border:1px solid #828790;box-sizing:border-box"></div>
<div class="t" style="left:326px;top:615.69px;font-size:11px;line-height:11px;color:#f5241a;font-weight:bold;letter-spacing:0.26px;">Raman scattering of excitation light might be detected!</div>
<div class="t" style="left:345px;top:631.69px;font-size:11px;line-height:11px;color:#000;">Raman scatter band:&nbsp; 612 nm to 618 nm</div>
<div class="t" style="left:345px;top:647.19px;font-size:11px;line-height:11px;color:#000;">Detection bandpass:&nbsp; 510 nm to 751 nm</div>
<div style="left:320px;top:841px;width:373px;height:71px;border:1px solid #d5dfe5;border-radius:3px;box-shadow:inset 1px 1px 0 #fff, 1px 1px 0 #fff;box-sizing:border-box"></div>
<div style="left:327px;top:840px;width:30px;height:3px;background:#f0f0f0"></div>
<div class="t" style="left:333px;top:834.69px;font-size:11px;line-height:11px;color:#000;">Log</div>
<div style="left:321px;top:849px;width:370px;height:62px;background:#fff;border:1px solid #828790;box-sizing:border-box"></div>
<div class="t" style="left:333px;top:854.69px;font-size:11px;line-height:11px;color:#000;">Send excitation wavelength (250.0 nm ) to device!</div>
<div class="t" style="left:333px;top:868.69px;font-size:11px;line-height:11px;color:#000;">Send excitation wavelength (510.0 nm ) to device!</div>
<div class="t" style="left:333px;top:882.69px;font-size:11px;line-height:11px;color:#000;">Send excitation wavelength (510.0 nm ) to device!</div>
<div style="left:673px;top:851px;width:16px;height:58px;background:linear-gradient(90deg,#e8e8e8,#f0f0f0 30%,#f0f0f0 70%,#e8e8e8)"></div>
<svg style="left:677px;top:858px" width="9" height="5"><path d="M0.5 4.5L4.5 0.5L8.5 4.5Z" fill="#333"/></svg>
<svg style="left:677px;top:899px" width="9" height="5"><path d="M0.5 0.5L4.5 4.5L8.5 0.5Z" fill="#333"/></svg>
<div style="left:674px;top:877px;width:14px;height:14px;background:linear-gradient(90deg,#f4f4f4,#e6e6e6 50%,#d4d4d4);border:1px solid #9c9c9c;border-radius:2px;box-sizing:border-box"></div>
<div style="left:699px;top:124px;width:452px;height:465px;border:1px solid #a0a0a0;box-shadow:inset -1px -1px 0 #fff, -1px -1px 0 #fff;box-sizing:border-box"></div>
<div style="left:703px;top:128px;width:442px;height:32px;border:1px solid #a0a0a0;box-shadow:inset 1px 1px 0 #fff, 1px 1px 0 #fff;box-sizing:border-box;background:#f0f0f0"></div>
<div class="t" style="left:625px;width:600px;text-align:center;top:133.42px;font-size:21px;line-height:21px;color:#c5d3e2;font-weight:bold;">Preview</div>
<div style="left:703px;top:161px;width:443px;height:423px;background:#c0c0c0"></div>
<div style="left:699px;top:594px;width:452px;height:317px;border:1px solid #a0a0a0;box-shadow:inset 0 0 0 1px #fff;box-sizing:border-box"></div>
<svg style="left:703px;top:161px" width="443" height="423" viewBox="703 161 443 423" shape-rendering="crispEdges"><line x1="764.5" y1="169" x2="764.5" y2="538" stroke="#b6b6b6" stroke-width="1"/><line x1="783.5" y1="169" x2="783.5" y2="538" stroke="#b6b6b6" stroke-width="1"/><line x1="819.5" y1="169" x2="819.5" y2="538" stroke="#b6b6b6" stroke-width="1"/><line x1="838.5" y1="169" x2="838.5" y2="538" stroke="#b6b6b6" stroke-width="1"/><line x1="875.5" y1="169" x2="875.5" y2="538" stroke="#b6b6b6" stroke-width="1"/><line x1="893.5" y1="169" x2="893.5" y2="538" stroke="#b6b6b6" stroke-width="1"/><line x1="930.5" y1="169" x2="930.5" y2="538" stroke="#b6b6b6" stroke-width="1"/><line x1="949.5" y1="169" x2="949.5" y2="538" stroke="#b6b6b6" stroke-width="1"/><line x1="985.5" y1="169" x2="985.5" y2="538" stroke="#b6b6b6" stroke-width="1"/><line x1="1004.5" y1="169" x2="1004.5" y2="538" stroke="#b6b6b6" stroke-width="1"/><line x1="1041.5" y1="169" x2="1041.5" y2="538" stroke="#b6b6b6" stroke-width="1"/><line x1="1059.5" y1="169" x2="1059.5" y2="538" stroke="#b6b6b6" stroke-width="1"/><line x1="1096.5" y1="169" x2="1096.5" y2="538" stroke="#b6b6b6" stroke-width="1"/><line x1="1115.5" y1="169" x2="1115.5" y2="538" stroke="#b6b6b6" stroke-width="1"/><line x1="755" y1="535.5" x2="1138" y2="535.5" stroke="#b6b6b6" stroke-width="1"/><line x1="755" y1="513.5" x2="1138" y2="513.5" stroke="#b6b6b6" stroke-width="1"/><line x1="755" y1="503.5" x2="1138" y2="503.5" stroke="#b6b6b6" stroke-width="1"/><line x1="755" y1="481.5" x2="1138" y2="481.5" stroke="#b6b6b6" stroke-width="1"/><line x1="755" y1="470.5" x2="1138" y2="470.5" stroke="#b6b6b6" stroke-width="1"/><line x1="755" y1="449.5" x2="1138" y2="449.5" stroke="#b6b6b6" stroke-width="1"/><line x1="755" y1="438.5" x2="1138" y2="438.5" stroke="#b6b6b6" stroke-width="1"/><line x1="755" y1="417.5" x2="1138" y2="417.5" stroke="#b6b6b6" stroke-width="1"/><line x1="755" y1="406.5" x2="1138" y2="406.5" stroke="#b6b6b6" stroke-width="1"/><line x1="755" y1="384.5" x2="1138" y2="384.5" stroke="#b6b6b6" stroke-width="1"/><line x1="755" y1="374.5" x2="1138" y2="374.5" stroke="#b6b6b6" stroke-width="1"/><line x1="755" y1="352.5" x2="1138" y2="352.5" stroke="#b6b6b6" stroke-width="1"/><line x1="755" y1="341.5" x2="1138" y2="341.5" stroke="#b6b6b6" stroke-width="1"/><line x1="755" y1="320.5" x2="1138" y2="320.5" stroke="#b6b6b6" stroke-width="1"/><line x1="755" y1="309.5" x2="1138" y2="309.5" stroke="#b6b6b6" stroke-width="1"/><line x1="755" y1="287.5" x2="1138" y2="287.5" stroke="#b6b6b6" stroke-width="1"/><line x1="755" y1="277.5" x2="1138" y2="277.5" stroke="#b6b6b6" stroke-width="1"/><line x1="755" y1="255.5" x2="1138" y2="255.5" stroke="#b6b6b6" stroke-width="1"/><line x1="755" y1="244.5" x2="1138" y2="244.5" stroke="#b6b6b6" stroke-width="1"/><line x1="755" y1="223.5" x2="1138" y2="223.5" stroke="#b6b6b6" stroke-width="1"/><line x1="755" y1="212.5" x2="1138" y2="212.5" stroke="#b6b6b6" stroke-width="1"/><line x1="755" y1="191.5" x2="1138" y2="191.5" stroke="#b6b6b6" stroke-width="1"/><line x1="755" y1="180.5" x2="1138" y2="180.5" stroke="#b6b6b6" stroke-width="1"/><line x1="801.5" y1="169" x2="801.5" y2="538" stroke="#a2a2a2" stroke-width="1"/><line x1="801.5" y1="532" x2="801.5" y2="538" stroke="#000" stroke-width="1"/><line x1="856.5" y1="169" x2="856.5" y2="538" stroke="#a2a2a2" stroke-width="1"/><line x1="856.5" y1="532" x2="856.5" y2="538" stroke="#000" stroke-width="1"/><line x1="912.5" y1="169" x2="912.5" y2="538" stroke="#a2a2a2" stroke-width="1"/><line x1="912.5" y1="532" x2="912.5" y2="538" stroke="#000" stroke-width="1"/><line x1="967.5" y1="169" x2="967.5" y2="538" stroke="#a2a2a2" stroke-width="1"/><line x1="967.5" y1="532" x2="967.5" y2="538" stroke="#000" stroke-width="1"/><line x1="1022.5" y1="169" x2="1022.5" y2="538" stroke="#a2a2a2" stroke-width="1"/><line x1="1022.5" y1="532" x2="1022.5" y2="538" stroke="#000" stroke-width="1"/><line x1="1078.5" y1="169" x2="1078.5" y2="538" stroke="#a2a2a2" stroke-width="1"/><line x1="1078.5" y1="532" x2="1078.5" y2="538" stroke="#000" stroke-width="1"/><line x1="1133.5" y1="169" x2="1133.5" y2="538" stroke="#a2a2a2" stroke-width="1"/><line x1="1133.5" y1="532" x2="1133.5" y2="538" stroke="#000" stroke-width="1"/><line x1="755" y1="524.5" x2="1138" y2="524.5" stroke="#a2a2a2" stroke-width="1"/><line x1="755" y1="524.5" x2="760" y2="524.5" stroke="#000" stroke-width="1"/><line x1="755" y1="492.5" x2="1138" y2="492.5" stroke="#a2a2a2" stroke-width="1"/><line x1="755" y1="492.5" x2="760" y2="492.5" stroke="#000" stroke-width="1"/><line x1="755" y1="460.5" x2="1138" y2="460.5" stroke="#a2a2a2" stroke-width="1"/><line x1="755" y1="460.5" x2="760" y2="460.5" stroke="#000" stroke-width="1"/><line x1="755" y1="427.5" x2="1138" y2="427.5" stroke="#a2a2a2" stroke-width="1"/><line x1="755" y1="427.5" x2="760" y2="427.5" stroke="#000" stroke-width="1"/><line x1="755" y1="395.5" x2="1138" y2="395.5" stroke="#a2a2a2" stroke-width="1"/><line x1="755" y1="395.5" x2="760" y2="395.5" stroke="#000" stroke-width="1"/><line x1="755" y1="363.5" x2="1138" y2="363.5" stroke="#a2a2a2" stroke-width="1"/><line x1="755" y1="363.5" x2="760" y2="363.5" stroke="#000" stroke-width="1"/><line x1="755" y1="330.5" x2="1138" y2="330.5" stroke="#a2a2a2" stroke-width="1"/><line x1="755" y1="330.5" x2="760" y2="330.5" stroke="#000" stroke-width="1"/><line x1="755" y1="298.5" x2="1138" y2="298.5" stroke="#a2a2a2" stroke-width="1"/><line x1="755" y1="298.5" x2="760" y2="298.5" stroke="#000" stroke-width="1"/><line x1="755" y1="266.5" x2="1138" y2="266.5" stroke="#a2a2a2" stroke-width="1"/><line x1="755" y1="266.5" x2="760" y2="266.5" stroke="#000" stroke-width="1"/><line x1="755" y1="234.5" x2="1138" y2="234.5" stroke="#a2a2a2" stroke-width="1"/><line x1="755" y1="234.5" x2="760" y2="234.5" stroke="#000" stroke-width="1"/><line x1="755" y1="201.5" x2="1138" y2="201.5" stroke="#a2a2a2" stroke-width="1"/><line x1="755" y1="201.5" x2="760" y2="201.5" stroke="#000" stroke-width="1"/><rect x="755" y="169" width="1" height="369" fill="#000"/><rect x="756" y="170" width="1" height="368" fill="#606060"/><rect x="755" y="169" width="383" height="1" fill="#000"/><rect x="755" y="170" width="383" height="1" fill="#8a8a8a"/><rect x="1136" y="169" width="2" height="369" fill="#000"/><rect x="755" y="536" width="383" height="2" fill="#000"/><rect x="956.5" y="181.5" width="79" height="4" fill="#d6d6d6" stroke="#000" stroke-width="1"/><rect x="957" y="182" width="78" height="1" fill="#ececec"/></svg>
<div class="t" style="right:412.5px;top:162.20px;font-size:13px;line-height:13px;color:#000;">18.0</div>
<div class="t" style="right:412.5px;top:194.20px;font-size:13px;line-height:13px;color:#000;">16.5</div>
<div class="t" style="right:412.5px;top:227.20px;font-size:13px;line-height:13px;color:#000;">15.0</div>
<div class="t" style="right:412.5px;top:259.20px;font-size:13px;line-height:13px;color:#000;">13.5</div>
<div class="t" style="right:412.5px;top:291.20px;font-size:13px;line-height:13px;color:#000;">12.0</div>
<div class="t" style="right:412.5px;top:323.20px;font-size:13px;line-height:13px;color:#000;">10.5</div>
<div class="t" style="right:412.5px;top:356.20px;font-size:13px;line-height:13px;color:#000;">9.0</div>
<div class="t" style="right:412.5px;top:388.20px;font-size:13px;line-height:13px;color:#000;">7.5</div>
<div class="t" style="right:412.5px;top:420.20px;font-size:13px;line-height:13px;color:#000;">6.0</div>
<div class="t" style="right:412.5px;top:453.20px;font-size:13px;line-height:13px;color:#000;">4.5</div>
<div class="t" style="right:412.5px;top:485.20px;font-size:13px;line-height:13px;color:#000;">3.0</div>
<div class="t" style="right:412.5px;top:517.20px;font-size:13px;line-height:13px;color:#000;">1.5</div>
<div class="t" style="left:500.5px;width:600px;text-align:center;top:542.00px;font-size:13px;line-height:13px;color:#000;">0.450</div>
<div class="t" style="left:555.8332px;width:600px;text-align:center;top:542.00px;font-size:13px;line-height:13px;color:#000;">0.525</div>
<div class="t" style="left:611.1664px;width:600px;text-align:center;top:542.00px;font-size:13px;line-height:13px;color:#000;">0.600</div>
<div class="t" style="left:666.4996px;width:600px;text-align:center;top:542.00px;font-size:13px;line-height:13px;color:#000;">0.675</div>
<div class="t" style="left:721.8328px;width:600px;text-align:center;top:542.00px;font-size:13px;line-height:13px;color:#000;">0.750</div>
<div class="t" style="left:777.1659999999999px;width:600px;text-align:center;top:542.00px;font-size:13px;line-height:13px;color:#000;">0.825</div>
<div class="t" style="left:832.4992px;width:600px;text-align:center;top:542.00px;font-size:13px;line-height:13px;color:#000;">0.900</div>
<div style="left:1146px;top:540px;width:6px;height:30px;background:#f0f0f0"></div>
<div class="t" style="left:645px;width:600px;text-align:center;top:560.80px;font-size:13px;line-height:13px;color:#000;">Wavelength [µm]</div>
<div class="t" style="left:658px;top:352px;width:120px;text-align:center;font-size:12px;line-height:12px;letter-spacing:0.1px;transform:rotate(-90deg)">Intensity [counts]</div>
<div style="left:438px;top:941px;width:586px;height:6px;background:#2e8b2e"></div>
<svg style="left:321px;top:920px" width="119" height="49" viewBox="321 920 119 49"><polygon points="322.00,921.00 420.50,921.00 438.00,943.50 420.50,966.00 322.00,966.00" fill="#000"/><polygon points="324.00,923.00 420.54,923.00 436.48,943.50 419.76,965.00 324.00,965.00" fill="#c4dcc4"/><polygon points="420.54,923.00 436.48,943.50 433.95,943.50 418.00,923.00" fill="#1c4a1c"/><polygon points="324.00,923.00 418.00,923.00 433.95,943.50 418.78,963.00 324.00,963.00" fill="#33cc33"/></svg>
<svg style="left:338px;top:934px" width="12" height="24" viewBox="0 0 12 24"><path d="M8.3 0.5V23.2M8.3 1C6.8 3.5 4 5.5 0.8 7" fill="none" stroke="#fff" stroke-width="2.3"/></svg>
<div class="t" style="left:359.5px;top:932.79px;font-size:11px;line-height:11px;color:#fff;">Sample</div>
<div class="t" style="left:359.5px;top:946.29px;font-size:11px;line-height:11px;color:#fff;">Setup</div>
<svg style="left:453px;top:920px" width="120" height="49" viewBox="453 920 120 49"><polygon points="454.00,921.00 553.50,921.00 571.00,943.50 552.72,967.00 454.00,967.00" fill="#000"/><polygon points="455.00,922.00 552.76,922.00 569.48,943.50 552.76,965.00 455.00,965.00" fill="#1f5a1f"/><polygon points="455.00,965.00 455.00,922.00 552.76,922.00 569.48,943.50 565.68,943.50 551.29,925.00 458.00,925.00 458.00,962.00" fill="#c0dcc0"/><polygon points="458.00,925.00 551.29,925.00 565.68,943.50 551.29,962.00 458.00,962.00" fill="#2f7d2f"/></svg>
<div class="t" style="left:463.5px;top:926.91px;font-size:32px;line-height:32px;color:#fff;">2</div>
<div class="t" style="left:488.1px;top:929.49px;font-size:11px;line-height:11px;color:#fff;">Optimize</div>
<div class="t" style="left:488.1px;top:943.39px;font-size:11px;line-height:11px;color:#fff;">Parameters</div>
<svg style="left:585px;top:920px" width="124" height="49" viewBox="585 920 124 49"><polygon points="586.00,921.00 689.50,921.00 707.00,943.50 688.72,967.00 586.00,967.00" fill="#000"/><polygon points="587.00,922.00 688.76,922.00 705.48,943.50 688.76,965.00 587.00,965.00" fill="#4a7a4a"/><polygon points="587.00,965.00 587.00,922.00 688.76,922.00 705.48,943.50 702.95,943.50 687.78,924.00 589.00,924.00 589.00,963.00" fill="#dcf2dc"/><polygon points="589.00,924.00 687.78,924.00 702.95,943.50 687.78,963.00 589.00,963.00" fill="#78b478"/></svg>
<div class="t" style="left:598.2px;top:927.91px;font-size:32px;line-height:32px;color:#d4ecd4;">3</div>
<div class="t" style="left:596.0px;top:926.91px;font-size:32px;line-height:32px;color:#4d6f4d;">3</div>
<div class="t" style="left:624.3px;top:934.09px;font-size:11px;line-height:11px;color:#d4ecd4;">Acquire</div>
<div class="t" style="left:624.3px;top:946.89px;font-size:11px;line-height:11px;color:#d4ecd4;">Spectrum</div>
<div class="t" style="left:623.3px;top:933.09px;font-size:11px;line-height:11px;color:#4d6f4d;">Acquire</div>
<div class="t" style="left:623.3px;top:945.89px;font-size:11px;line-height:11px;color:#4d6f4d;">Spectrum</div>
<svg style="left:717px;top:920px" width="124" height="49" viewBox="717 920 124 49"><polygon points="718.00,921.00 821.50,921.00 839.00,943.50 820.72,967.00 718.00,967.00" fill="#000"/><polygon points="719.00,922.00 820.76,922.00 837.48,943.50 820.76,965.00 719.00,965.00" fill="#4a7a4a"/><polygon points="719.00,965.00 719.00,922.00 820.76,922.00 837.48,943.50 834.95,943.50 819.78,924.00 721.00,924.00 721.00,963.00" fill="#dcf2dc"/><polygon points="721.00,924.00 819.78,924.00 834.95,943.50 819.78,963.00 721.00,963.00" fill="#78b478"/></svg>
<div class="t" style="left:729.7px;top:927.91px;font-size:32px;line-height:32px;color:#d4ecd4;">4</div>
<div class="t" style="left:727.5px;top:926.91px;font-size:32px;line-height:32px;color:#4d6f4d;">4</div>
<div class="t" style="left:756.3px;top:934.09px;font-size:11px;line-height:11px;color:#d4ecd4;">Acquire</div>
<div class="t" style="left:756.3px;top:946.89px;font-size:11px;line-height:11px;color:#d4ecd4;">Blank</div>
<div class="t" style="left:755.3px;top:933.09px;font-size:11px;line-height:11px;color:#4d6f4d;">Acquire</div>
<div class="t" style="left:755.3px;top:945.89px;font-size:11px;line-height:11px;color:#4d6f4d;">Blank</div>
<svg style="left:849px;top:920px" width="123" height="49" viewBox="849 920 123 49"><polygon points="850.00,921.00 952.50,921.00 970.00,943.50 951.72,967.00 850.00,967.00" fill="#000"/><polygon points="851.00,922.00 951.76,922.00 968.48,943.50 951.76,965.00 851.00,965.00" fill="#4a7a4a"/><polygon points="851.00,965.00 851.00,922.00 951.76,922.00 968.48,943.50 965.95,943.50 950.78,924.00 853.00,924.00 853.00,963.00" fill="#dcf2dc"/><polygon points="853.00,924.00 950.78,924.00 965.95,943.50 950.78,963.00 853.00,963.00" fill="#78b478"/></svg>
<div class="t" style="left:861.2px;top:927.91px;font-size:32px;line-height:32px;color:#d4ecd4;">5</div>
<div class="t" style="left:859.0px;top:926.91px;font-size:32px;line-height:32px;color:#4d6f4d;">5</div>
<div class="t" style="left:888.5px;top:934.09px;font-size:11px;line-height:11px;color:#d4ecd4;">Calculate</div>
<div class="t" style="left:888.5px;top:946.89px;font-size:11px;line-height:11px;color:#d4ecd4;">QY</div>
<div class="t" style="left:887.5px;top:933.09px;font-size:11px;line-height:11px;color:#4d6f4d;">Calculate</div>
<div class="t" style="left:887.5px;top:945.89px;font-size:11px;line-height:11px;color:#4d6f4d;">QY</div>
<svg style="left:1023px;top:920px" width="125" height="49" viewBox="1023 920 125 49"><polygon points="1024.00,921.00 1146.00,921.00 1146.00,967.00 1024.00,967.00" fill="#000"/><polygon points="1025.00,922.00 1144.80,922.00 1144.80,965.00 1025.00,965.00" fill="#4a7a4a"/><polygon points="1025.00,965.00 1025.00,922.00 1144.80,922.00 1142.80,924.00 1027.00,924.00 1027.00,963.00" fill="#dcf2dc"/><polygon points="1027.00,924.00 1142.80,924.00 1142.80,963.00 1027.00,963.00" fill="#78b478"/></svg>
<div class="t" style="left:1035px;top:927.91px;font-size:32px;line-height:32px;color:#d4ecd4;">6</div>
<div class="t" style="left:1032.8px;top:926.91px;font-size:32px;line-height:32px;color:#4d6f4d;">6</div>
<div class="t" style="left:1062.4px;top:934.09px;font-size:11px;line-height:11px;color:#d4ecd4;">Save &amp;</div>
<div class="t" style="left:1062.4px;top:946.89px;font-size:11px;line-height:11px;color:#d4ecd4;">Exit</div>
<div class="t" style="left:1061.4px;top:933.09px;font-size:11px;line-height:11px;color:#4d6f4d;">Save &amp;</div>
<div class="t" style="left:1061.4px;top:945.89px;font-size:11px;line-height:11px;color:#4d6f4d;">Exit</div>
<svg style="left:430px;top:900px" width="160" height="90" viewBox="430 900 160 90"><ellipse cx="509" cy="943.5" rx="67" ry="31.5" fill="none" stroke="#f96250" stroke-width="9"/></svg>
<svg style="left:0;top:0" width="0" height="0"><defs><linearGradient id="rb" x1="0" x2="1"><stop offset="0" stop-color="#ff00ff"/><stop offset=".2" stop-color="#0000ff"/><stop offset=".4" stop-color="#00ffff"/><stop offset=".6" stop-color="#00ff00"/><stop offset=".8" stop-color="#ffff00"/><stop offset="1" stop-color="#ff0000"/></linearGradient><linearGradient id="nb" x1="0" x2="1"><stop offset="0" stop-color="#00007a"/><stop offset=".6" stop-color="#6a6aa0"/><stop offset="1" stop-color="#e8dcd0"/></linearGradient></defs></svg>
<svg style="left:9px;top:53px" width="36" height="36" viewBox="0 0 36 36"><rect x="8.5" y="4.5" width="21.5" height="29.5" fill="#fff" stroke="#000" stroke-width="1"/><path d="M21 7h6.5v5.7h6.2v5.3h-6.2v6.7h-6.5v-6.7h-4v-5.3h4z" fill="#00b020"/><path d="M21 12.7h-4v5.3h4v6.7h6.5v-6.7" fill="none" stroke="#008a18" stroke-width=".7"/></svg>
<svg style="left:48px;top:53px" width="36" height="36" viewBox="0 0 36 36"><path d="M3.5 28.5V13l2.7-3.5h6.6l1.8 2.5h15.2v16.5z" fill="#087a30"/><path d="M7.2 15h28l-7 16.2h-24.7z" fill="#00b020"/></svg>
<svg style="left:87px;top:53px" width="36" height="36" viewBox="0 0 36 36"><path d="M4 12C5 5 11 2.5 17.5 5.5" fill="none" stroke="#087a30" stroke-width="2.4"/><path d="M14.5 2.2l7.5 1.6l-2.5 8.2z" fill="#087a30"/><rect x="8.7" y="14.8" width="19.9" height="3.4" rx="1" fill="#087a30"/><path d="M9.6 18.2h18l-1.6 15.8h-14.8z" fill="#00b020" stroke="#087a30" stroke-width="1.4"/><path d="M14.3 20.5l1 11.5M18.6 20.5v11.5M22.9 20.5l-1 11.5" stroke="#e8ffe8" stroke-width="1"/></svg>
<svg style="left:146px;top:53px" width="36" height="36" viewBox="0 0 36 36"><rect x="7" y="7" width="24" height="24" fill="#00ff00"/><path d="M23 7h8v24h-15v-6h7v-6h-7v-6h7z" fill="#008000"/><rect x="23" y="7" width="1.5" height="5.5" fill="#000"/><rect x="23" y="19" width="1.5" height="5.5" fill="#000"/><rect x="14.5" y="13" width="1.5" height="5.5" fill="#000"/><rect x="14.5" y="25" width="1.5" height="6" fill="#000"/></svg>
<svg style="left:185px;top:53px" width="36" height="36" viewBox="0 0 36 36"><rect x="6.2" y="4" width="24.3" height="29.5" fill="#fff" stroke="#000" stroke-width="1.2"/><path d="M7 31C10.5 31 9 13 11.5 13C14 13 21 29 29.5 30" fill="none" stroke="#0f7a30" stroke-width="2.8"/><path d="M22 16.5l7-7.5l2.3 2.3l-7 7.5l-3.4 1z" fill="#10b030" stroke="#087a30" stroke-width=".8"/></svg>
<svg style="left:449px;top:53px" width="36" height="36" viewBox="0 0 36 36"><rect x="4" y="3" width="2" height="31.7" fill="#000"/><rect x="2.2" y="31.2" width="31.7" height="1.7" fill="#000"/><path d="M5.9 30.1C8 28 9 21.4 10.5 21.4C12 21.4 22 27 28.5 30.6" fill="none" stroke="#00009a" stroke-width="2.6"/><path d="M28 9.6L11.8 26.8" stroke="#0a8a2a" stroke-width="2.4"/><path d="M20.5 17.5L15.5 22.5" stroke="#0a8a2a" stroke-width="4"/><ellipse cx="29.8" cy="7.2" rx="4" ry="3.4" transform="rotate(-45 29.8 7.2)" fill="#0a7a28"/><path d="M18 12.6L30.6 25.6" stroke="#0a7a28" stroke-width="3.8" stroke-linecap="round"/><path d="M14.9 4.9A4 4 0 1 1 9.6 10.3" fill="none" stroke="#0a8a2a" stroke-width="3.4"/><circle cx="30.4" cy="25.5" r="1" fill="#fff"/></svg>
<svg style="left:550px;top:53px" width="36" height="36" viewBox="0 0 36 36"><rect x="4.9" y="3" width="2" height="31.5" fill="#000"/><rect x="3.2" y="31" width="31.8" height="1.8" fill="#000"/><rect x="6.9" y="28" width="28.1" height="2.8" fill="url(#rb)"/><path d="M6.9 27C8.5 23 10 18 11.7 18C13.5 18 14 23.4 15.9 23.4C18 23.4 19 10 21 10C23 10 24.5 20 26.2 27" fill="none" stroke="#00008c" stroke-width="2.8"/></svg>
<svg style="left:589px;top:53px" width="36" height="36" viewBox="0 0 36 36"><rect x="4.9" y="3" width="2" height="31.5" fill="#000"/><rect x="3.2" y="31" width="31.8" height="1.8" fill="#000"/><rect x="6.9" y="28" width="28.1" height="2.8" fill="url(#rb)"/><path d="M9.5 27C12 21 17.5 9.7 19.8 9.7C22 9.7 23 22 25 22C26.8 22 27.3 17.9 29.1 17.9C31 17.9 33 23 34.6 27.5" fill="none" stroke="#e01414" stroke-width="2.8"/></svg>
<svg style="left:638px;top:53px" width="36" height="36" viewBox="0 0 36 36"><rect x="4.9" y="3" width="2" height="31.5" fill="#000"/><rect x="3.2" y="31" width="31.8" height="1.8" fill="#000"/><rect x="6.9" y="28" width="28.1" height="2.8" fill="url(#rb)"/><path d="M6.9 27C8.5 23 10 18 11.7 18C13.5 18 14 23.4 15.9 23.4C18 23.4 19 10 21 10C23 10 24.5 20 26.2 27" fill="none" stroke="#00008c" stroke-width="2.8"/><path d="M30.3 3.2 l3.6 3v3.6l-3.6 3.2l-3.6-3.2v-3.6z" fill="#0a7a28"/><path d="M30.3 5.2 l2 1.8v2.4l-2 1.8l-2-1.8v-2.4z" fill="#10c030"/><path d="M30.3 14.3 l3.6 3v3.6l-3.6 3.2l-3.6-3.2v-3.6z" fill="#0a7a28"/><path d="M30.3 16.3 l2 1.8v2.4l-2 1.8l-2-1.8v-2.4z" fill="#10c030"/><rect x="25.3" y="12.8" width="10" height="1" fill="#0a7a28"/><rect x="29.7" y="22" width="1.2" height="5" fill="#0a7a28"/></svg>
<svg style="left:677px;top:53px" width="36" height="36" viewBox="0 0 36 36"><rect x="4.9" y="3" width="2" height="31.5" fill="#000"/><rect x="3.2" y="31" width="31.8" height="1.8" fill="#000"/><rect x="6.9" y="28" width="28.1" height="2.8" fill="url(#rb)"/><path d="M11.2 3.2 l3.6 3v3.6l-3.6 3.2l-3.6-3.2v-3.6z" fill="#0a7a28"/><path d="M11.2 5.2 l2 1.8v2.4l-2 1.8l-2-1.8v-2.4z" fill="#10c030"/><path d="M11.2 14.3 l3.6 3v3.6l-3.6 3.2l-3.6-3.2v-3.6z" fill="#0a7a28"/><path d="M11.2 16.3 l2 1.8v2.4l-2 1.8l-2-1.8v-2.4z" fill="#10c030"/><rect x="6.199999999999999" y="12.8" width="10" height="1" fill="#0a7a28"/><rect x="10.6" y="22" width="1.2" height="5" fill="#0a7a28"/><path d="M14 27C16 21 17.5 9.7 19.8 9.7C22 9.7 23 22 25 22C26.8 22 27.3 17.9 29.1 17.9C31 17.9 33 23 34.6 27.5" fill="none" stroke="#e01414" stroke-width="2.8"/></svg>
<svg style="left:726px;top:53px" width="36" height="36" viewBox="0 0 36 36"><rect x="4.9" y="3" width="2" height="31.5" fill="#000"/><rect x="3.2" y="31" width="31.8" height="1.8" fill="#000"/><rect x="6.9" y="28" width="28.1" height="2.8" fill="url(#rb)"/><path d="M6.9 27C8.5 23 10 18 11.7 18C13.5 18 14 23.4 15.9 23.4C18 23.4 19 10 21 10C23 10 24.5 20 26.2 27" fill="none" stroke="#00008c" stroke-width="2.8"/><rect x="25.1" y="3.2" width="9.7" height="24.6" fill="#0a0a0a"/><rect x="27.900000000000002" y="3.2" width="4.1" height="2.7" fill="#10c030"/><rect x="27.900000000000002" y="8" width="4.1" height="5.5" fill="#10c030"/><rect x="27.900000000000002" y="14.8" width="4.1" height="5.5" fill="#10c030"/><rect x="27.900000000000002" y="21.7" width="4.1" height="4.9" fill="#10c030"/><path d="M26.400000000000002 4v23M33.5 4v23" stroke="#10c030" stroke-width="1" stroke-dasharray="1.6 1.6"/></svg>
<svg style="left:765px;top:53px" width="36" height="36" viewBox="0 0 36 36"><rect x="5" y="3.2" width="9.7" height="24.6" fill="#0a0a0a"/><rect x="7.8" y="3.2" width="4.1" height="2.7" fill="#10c030"/><rect x="7.8" y="8" width="4.1" height="5.5" fill="#10c030"/><rect x="7.8" y="14.8" width="4.1" height="5.5" fill="#10c030"/><rect x="7.8" y="21.7" width="4.1" height="4.9" fill="#10c030"/><path d="M6.3 4v23M13.4 4v23" stroke="#10c030" stroke-width="1" stroke-dasharray="1.6 1.6"/><rect x="4.9" y="3" width="2" height="31.5" fill="#000"/><rect x="3.2" y="31" width="31.8" height="1.8" fill="#000"/><rect x="6.9" y="28" width="28.1" height="2.8" fill="url(#rb)"/><path d="M14 27C16 21 17.5 9.7 19.8 9.7C22 9.7 23 22 25 22C26.8 22 27.3 17.9 29.1 17.9C31 17.9 33 23 34.6 27.5" fill="none" stroke="#e01414" stroke-width="2.8"/></svg>
<svg style="left:814px;top:53px" width="36" height="36" viewBox="0 0 36 36"><rect x="4.9" y="3" width="2" height="31.5" fill="#000"/><rect x="3.2" y="31" width="31.8" height="1.8" fill="#000"/><rect x="7.9" y="17.1" width="2" height="13.899999999999999" fill="#d86a00"/><rect x="11.1" y="5.2" width="2" height="25.8" fill="#e01010"/><rect x="13.9" y="25" width="2" height="6" fill="#f5a000"/><rect x="17.1" y="5.2" width="2" height="25.8" fill="#e01010"/><rect x="20.1" y="17.1" width="2" height="13.899999999999999" fill="#d86a00"/><rect x="23" y="25" width="2" height="6" fill="#f5a000"/><rect x="26" y="17.1" width="2" height="13.899999999999999" fill="#d86a00"/><rect x="29" y="25" width="2" height="6" fill="#f5a000"/><rect x="32" y="25" width="2" height="6" fill="#f5a000"/><path d="M27.2 3.2h2.6v2h3.2v2.5h-3.2v3.5c0 .8 .4 1 1.2 1h1.9v-.8h1.1v2.2c-.3 .8-1 1.1-2.2 1.1h-2.5c-1.4 0-2.1-.7-2.1-2.1v-4.9h-2.2v-2.5h2.2z" fill="#087a30"/></svg>
<svg style="left:853px;top:53px" width="36" height="36" viewBox="0 0 36 36"><defs><radialGradient id="cg" gradientUnits="userSpaceOnUse" cx="6" cy="17.5" r="28" gradientTransform="translate(6 17.5) scale(1 0.5) translate(-6 -17.5)"><stop offset="0" stop-color="#ff5000"/><stop offset=".12" stop-color="#ffe000"/><stop offset=".3" stop-color="#00c000"/><stop offset=".5" stop-color="#00b0f0"/><stop offset=".7" stop-color="#1050ff"/><stop offset=".86" stop-color="#5a50e0"/><stop offset="1" stop-color="#c8c0e8" stop-opacity="0"/></radialGradient></defs><rect x="6" y="3" width="29" height="29" fill="url(#cg)"/><rect x="4.9" y="3" width="2" height="31.5" fill="#000"/><rect x="3.2" y="31" width="31.8" height="1.8" fill="#000"/></svg>
<svg style="left:892px;top:53px" width="36" height="36" viewBox="0 0 36 36"><rect x="4.9" y="11" width="2" height="23.5" fill="#000"/><rect x="3.2" y="31" width="31.8" height="1.8" fill="#000"/><rect x="6.9" y="28" width="28.1" height="2.8" fill="url(#rb)"/><path d="M11.3 27.5C14 21 17.5 9.7 19.8 9.7C22 9.7 23 22 25 22C26.8 22 27.3 17.9 29.1 17.9C31 17.9 33 23 34.6 27.5" fill="none" stroke="#e01414" stroke-width="2.8"/><text x="4.6" y="11.8" font-family="Liberation Sans" font-weight="bold" font-size="11" fill="#087a30">Φ</text><text x="10.3" y="14.8" font-family="Liberation Sans" font-weight="bold" font-size="8.5" fill="#087a30">F</text></svg>
<svg style="left:931px;top:53px" width="36" height="36" viewBox="0 0 36 36"><rect x="4.9" y="3" width="2" height="31.5" fill="#000"/><rect x="3.2" y="31" width="31.8" height="1.8" fill="#000"/><rect x="6.9" y="28" width="28.1" height="2.8" fill="url(#rb)"/><path d="M14 27C16 21 17.5 9.7 19.8 9.7C22 9.7 23 22 25 22C26.8 22 27.3 17.9 29.1 17.9C31 17.9 33 23 34.6 27.5" fill="none" stroke="#e01414" stroke-width="2.8"/><path d="M9.5 3.2h3.2l2 2v10.2a3.6 3.6 0 1 1-7.2 1.8v-11.8z" fill="#fff" stroke="#087a30" stroke-width="1.5"/><rect x="10" y="8" width="2.2" height="8" fill="#e01414"/><circle cx="11.1" cy="17.3" r="2.3" fill="#e01414"/><path d="M12.7 5.4h4M12.7 7.3h3.2M12.7 9.5h4M12.7 11.5h3.2M12.7 13.3h4" stroke="#087a30" stroke-width="1"/></svg>
<svg style="left:1000px;top:53px" width="36" height="36" viewBox="0 0 36 36"><rect x="4.9" y="3" width="2" height="31.5" fill="#000"/><rect x="3.2" y="31" width="31.8" height="1.8" fill="#000"/><rect x="6.9" y="28" width="28.1" height="3" fill="url(#nb)"/><path d="M7.1 27C10 27 9.6 8.7 11.5 8.7C14 8.7 24 25.8 29.8 25.8L34.8 26.2" fill="none" stroke="#087530" stroke-width="2.9"/></svg>
<svg style="left:1039px;top:53px" width="36" height="36" viewBox="0 0 36 36"><rect x="4.9" y="3" width="2" height="31.5" fill="#000"/><rect x="3.2" y="31" width="31.8" height="1.8" fill="#000"/><rect x="6.9" y="28" width="28.1" height="3" fill="url(#nb)"/><path d="M7.1 27C10 27 9.6 8.7 11.5 8.7C14 8.7 24 25.8 29.8 25.8L34.8 26.2" fill="none" stroke="#087530" stroke-width="2.9"/><path d="M30.3 3.2 l3.6 3v3.6l-3.6 3.2l-3.6-3.2v-3.6z" fill="#0a7a28"/><path d="M30.3 5.2 l2 1.8v2.4l-2 1.8l-2-1.8v-2.4z" fill="#10c030"/><path d="M30.3 14.3 l3.6 3v3.6l-3.6 3.2l-3.6-3.2v-3.6z" fill="#0a7a28"/><path d="M30.3 16.3 l2 1.8v2.4l-2 1.8l-2-1.8v-2.4z" fill="#10c030"/><rect x="25.3" y="12.8" width="10" height="1" fill="#0a7a28"/><rect x="29.7" y="22" width="1.2" height="5" fill="#0a7a28"/></svg>
<svg style="left:1078px;top:53px" width="36" height="36" viewBox="0 0 36 36"><rect x="4.9" y="3" width="2" height="31.5" fill="#000"/><rect x="3.2" y="31" width="31.8" height="1.8" fill="#000"/><rect x="6.9" y="28" width="28.1" height="3" fill="url(#nb)"/><path d="M7.1 27C10 27 9.6 8.7 11.5 8.7C14 8.7 24 25.8 29.8 25.8L34.8 26.2" fill="none" stroke="#087530" stroke-width="2.9"/><defs><linearGradient id="rb2" gradientUnits="userSpaceOnUse" x1="22" y1="15" x2="34" y2="4"><stop offset="0" stop-color="#ff00ff"/><stop offset=".25" stop-color="#0000ff"/><stop offset=".45" stop-color="#00ffff"/><stop offset=".6" stop-color="#00ff00"/><stop offset=".8" stop-color="#ffff00"/><stop offset="1" stop-color="#ff0000"/></linearGradient></defs><path d="M21.9 14.7L29 8.3" stroke="url(#rb2)" stroke-width="3.2"/><path d="M23.8 4H34V13.9z" fill="url(#rb2)"/></svg>
<svg style="left:1117px;top:53px" width="36" height="36" viewBox="0 0 36 36"><rect x="4.9" y="3" width="2" height="31.5" fill="#000"/><rect x="3.2" y="31" width="31.8" height="1.8" fill="#000"/><rect x="6.9" y="28" width="28.1" height="3" fill="url(#nb)"/><path d="M7.1 27C10 27 9.6 8.7 11.5 8.7C14 8.7 24 25.8 29.8 25.8L35 26.2" fill="none" stroke="#087530" stroke-width="2.9"/><rect x="25.1" y="3.2" width="9.7" height="24.6" fill="#0a0a0a"/><rect x="27.900000000000002" y="3.2" width="4.1" height="2.7" fill="#10c030"/><rect x="27.900000000000002" y="8" width="4.1" height="5.5" fill="#10c030"/><rect x="27.900000000000002" y="14.8" width="4.1" height="5.5" fill="#10c030"/><rect x="27.900000000000002" y="21.7" width="4.1" height="4.9" fill="#10c030"/><path d="M26.400000000000002 4v23M33.5 4v23" stroke="#10c030" stroke-width="1" stroke-dasharray="1.6 1.6"/></svg>
</body></html>
